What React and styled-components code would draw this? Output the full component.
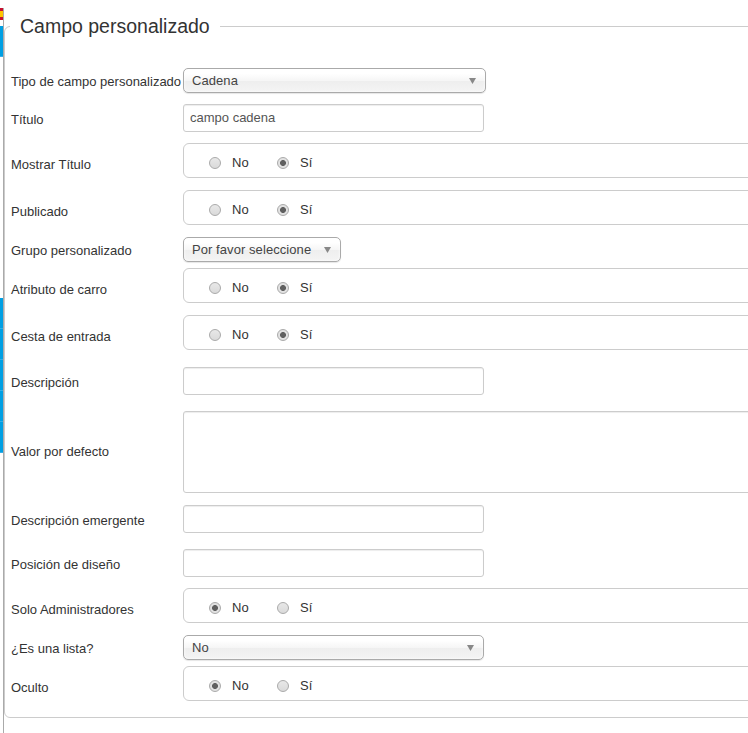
import React from "react";
import styled, { createGlobalStyle } from "styled-components";

const GlobalStyle = createGlobalStyle`
  * { box-sizing: border-box; }
  body {
    margin: 0;
    background: #fff;
    color: #333;
    font: 13px/18px "Liberation Sans", Arial, sans-serif;
    overflow: hidden;
  }
`;

const Page = styled.div`
  display: flex;
  width: 748px;
  height: 733px;
  overflow: hidden;
`;

const Sidebar = styled.aside`
  flex: none;
  width: 3px;
  padding-top: 8px;
`;

const Flag = styled.div`
  height: 12px;
  background: linear-gradient(#c8102e 0 3px, #ffc400 3px 9px, #c8102e 9px);
`;

const MenuBlock = styled.div`
  height: ${(p) => p.$height}px;
  margin-top: ${(p) => p.$gap}px;
  background: repeating-linear-gradient(#009fe3 0 30px, #33aee8 30px 31px);
`;

const Content = styled.main`
  flex: none;
  width: 780px;
  height: 725px;
  margin-top: 8px;
  border-left: 1px solid #aaa;
`;

const Fieldset = styled.fieldset`
  width: 775px;
  height: 712px;
  margin: -2px 0 0;
  padding: 0 0 0 6px;
  border: 1px solid #ccc;
  border-radius: 6px;
`;

const Legend = styled.legend`
  height: 40px;
  margin: 0 0 22px -1px;
  padding: 0 10px;
  font-size: 19.5px;
  line-height: 40px;
`;

const Row = styled.div`
  display: grid;
  grid-template-columns: 172px 1fr;
  align-items: center;
  margin-bottom: ${(p) => p.$gap}px;
`;

const Label = styled.label`
  padding-top: ${(p) => p.$drop}px;
  white-space: nowrap;
`;

const Select = styled.div`
  display: flex;
  align-items: center;
  justify-content: space-between;
  width: ${(p) => p.$width}px;
  height: 25px;
  padding: 0 9px 0 8px;
  border: 1px solid #aaa;
  border-radius: 5px;
  color: #444;
  letter-spacing: 0.07px;
  background: linear-gradient(#fff 20%, #f6f6f6 50%, #eee 52%, #f4f4f4 100%);
  box-shadow: 0 0 3px #fff inset, 0 1px 1px rgba(0, 0, 0, 0.1);
`;

const Arrow = styled.svg`
  width: 7px;
  height: 6px;
  fill: #888;
`;

const Input = styled.input`
  width: 301px;
  height: 28px;
  padding: 0 6px 2px;
  border: 1px solid #ccc;
  border-radius: 3px;
  outline: none;
  color: #555;
  font: inherit;
  box-shadow: inset 0 1px 1px rgba(0, 0, 0, 0.075);
`;

const TextArea = styled.textarea`
  display: block;
  width: 100%;
  height: 82px;
  border: 1px solid #ccc;
  border-radius: 3px;
  outline: none;
  resize: none;
  box-shadow: inset 0 1px 1px rgba(0, 0, 0, 0.075);
`;

const RadioGroup = styled.div`
  display: flex;
  height: 35px;
  padding: 10px 0 0 25px;
  border: 1px solid #ccc;
  border-radius: 6px;
`;

const Option = styled.div`
  display: flex;
  width: 68px;
`;

const Radio = styled.span`
  flex: none;
  width: 12px;
  height: 12px;
  margin: 3px 11px 0 0;
  border: 1px solid #aaa;
  border-radius: 50%;
  background: ${(p) =>
    p.$on
      ? "radial-gradient(circle, #606060 0 2.6px, #e2e2e2 3.3px)"
      : "linear-gradient(#e8e8e8, #dadada)"};
`;

function SelectBox({ width, children }) {
  return (
    <Select $width={width}>
      {children}
      <Arrow viewBox="0 0 7 6"><path d="M0 0h7L3.5 6z" /></Arrow>
    </Select>
  );
}

function YesNo({ value }) {
  return (
    <RadioGroup>
      {["No", "Sí"].map((name) => (
        <Option key={name}><Radio $on={value === name} />{name}</Option>
      ))}
    </RadioGroup>
  );
}

const labelDrop = { select: 2, text: 4, radio: 8, area: 0 };

const fields = [
  { label: "Tipo de campo personalizado", type: "select", value: "Cadena", width: 303, gap: 11 },
  { label: "Título", type: "text", value: "campo cadena", gap: 11 },
  { label: "Mostrar Título", type: "radio", value: "Sí", gap: 12 },
  { label: "Publicado", type: "radio", value: "Sí", gap: 12 },
  { label: "Grupo personalizado", type: "select", value: "Por favor seleccione", width: 158, gap: 6 },
  { label: "Atributo de carro", type: "radio", value: "Sí", gap: 12 },
  { label: "Cesta de entrada", type: "radio", value: "Sí", gap: 17 },
  { label: "Descripción", type: "text", value: "", gap: 16 },
  { label: "Valor por defecto", type: "area", value: "", gap: 12 },
  { label: "Descripción emergente", type: "text", value: "", gap: 16 },
  { label: "Posición de diseño", type: "text", value: "", gap: 11 },
  { label: "Solo Administradores", type: "radio", value: "No", gap: 12 },
  { label: "¿Es una lista?", type: "select", value: "No", width: 301, gap: 6 },
  { label: "Oculto", type: "radio", value: "No", gap: 0 },
];

function Control({ field }) {
  if (field.type === "select") return <SelectBox width={field.width}>{field.value}</SelectBox>;
  if (field.type === "radio") return <YesNo value={field.value} />;
  if (field.type === "area") return <TextArea defaultValue={field.value} />;
  return <Input defaultValue={field.value} />;
}

export default function App() {
  return (
    <Page>
      <GlobalStyle />
      <Sidebar>
        <Flag />
        <MenuBlock $height={31} $gap={6} />
        <MenuBlock $height={155} $gap={241} />
      </Sidebar>
      <Content>
        <Fieldset>
          <Legend>Campo personalizado</Legend>
          {fields.map((field) => (
            <Row key={field.label} $gap={field.gap}>
              <Label $drop={labelDrop[field.type]}>{field.label}</Label>
              <Control field={field} />
            </Row>
          ))}
        </Fieldset>
      </Content>
    </Page>
  );
}
